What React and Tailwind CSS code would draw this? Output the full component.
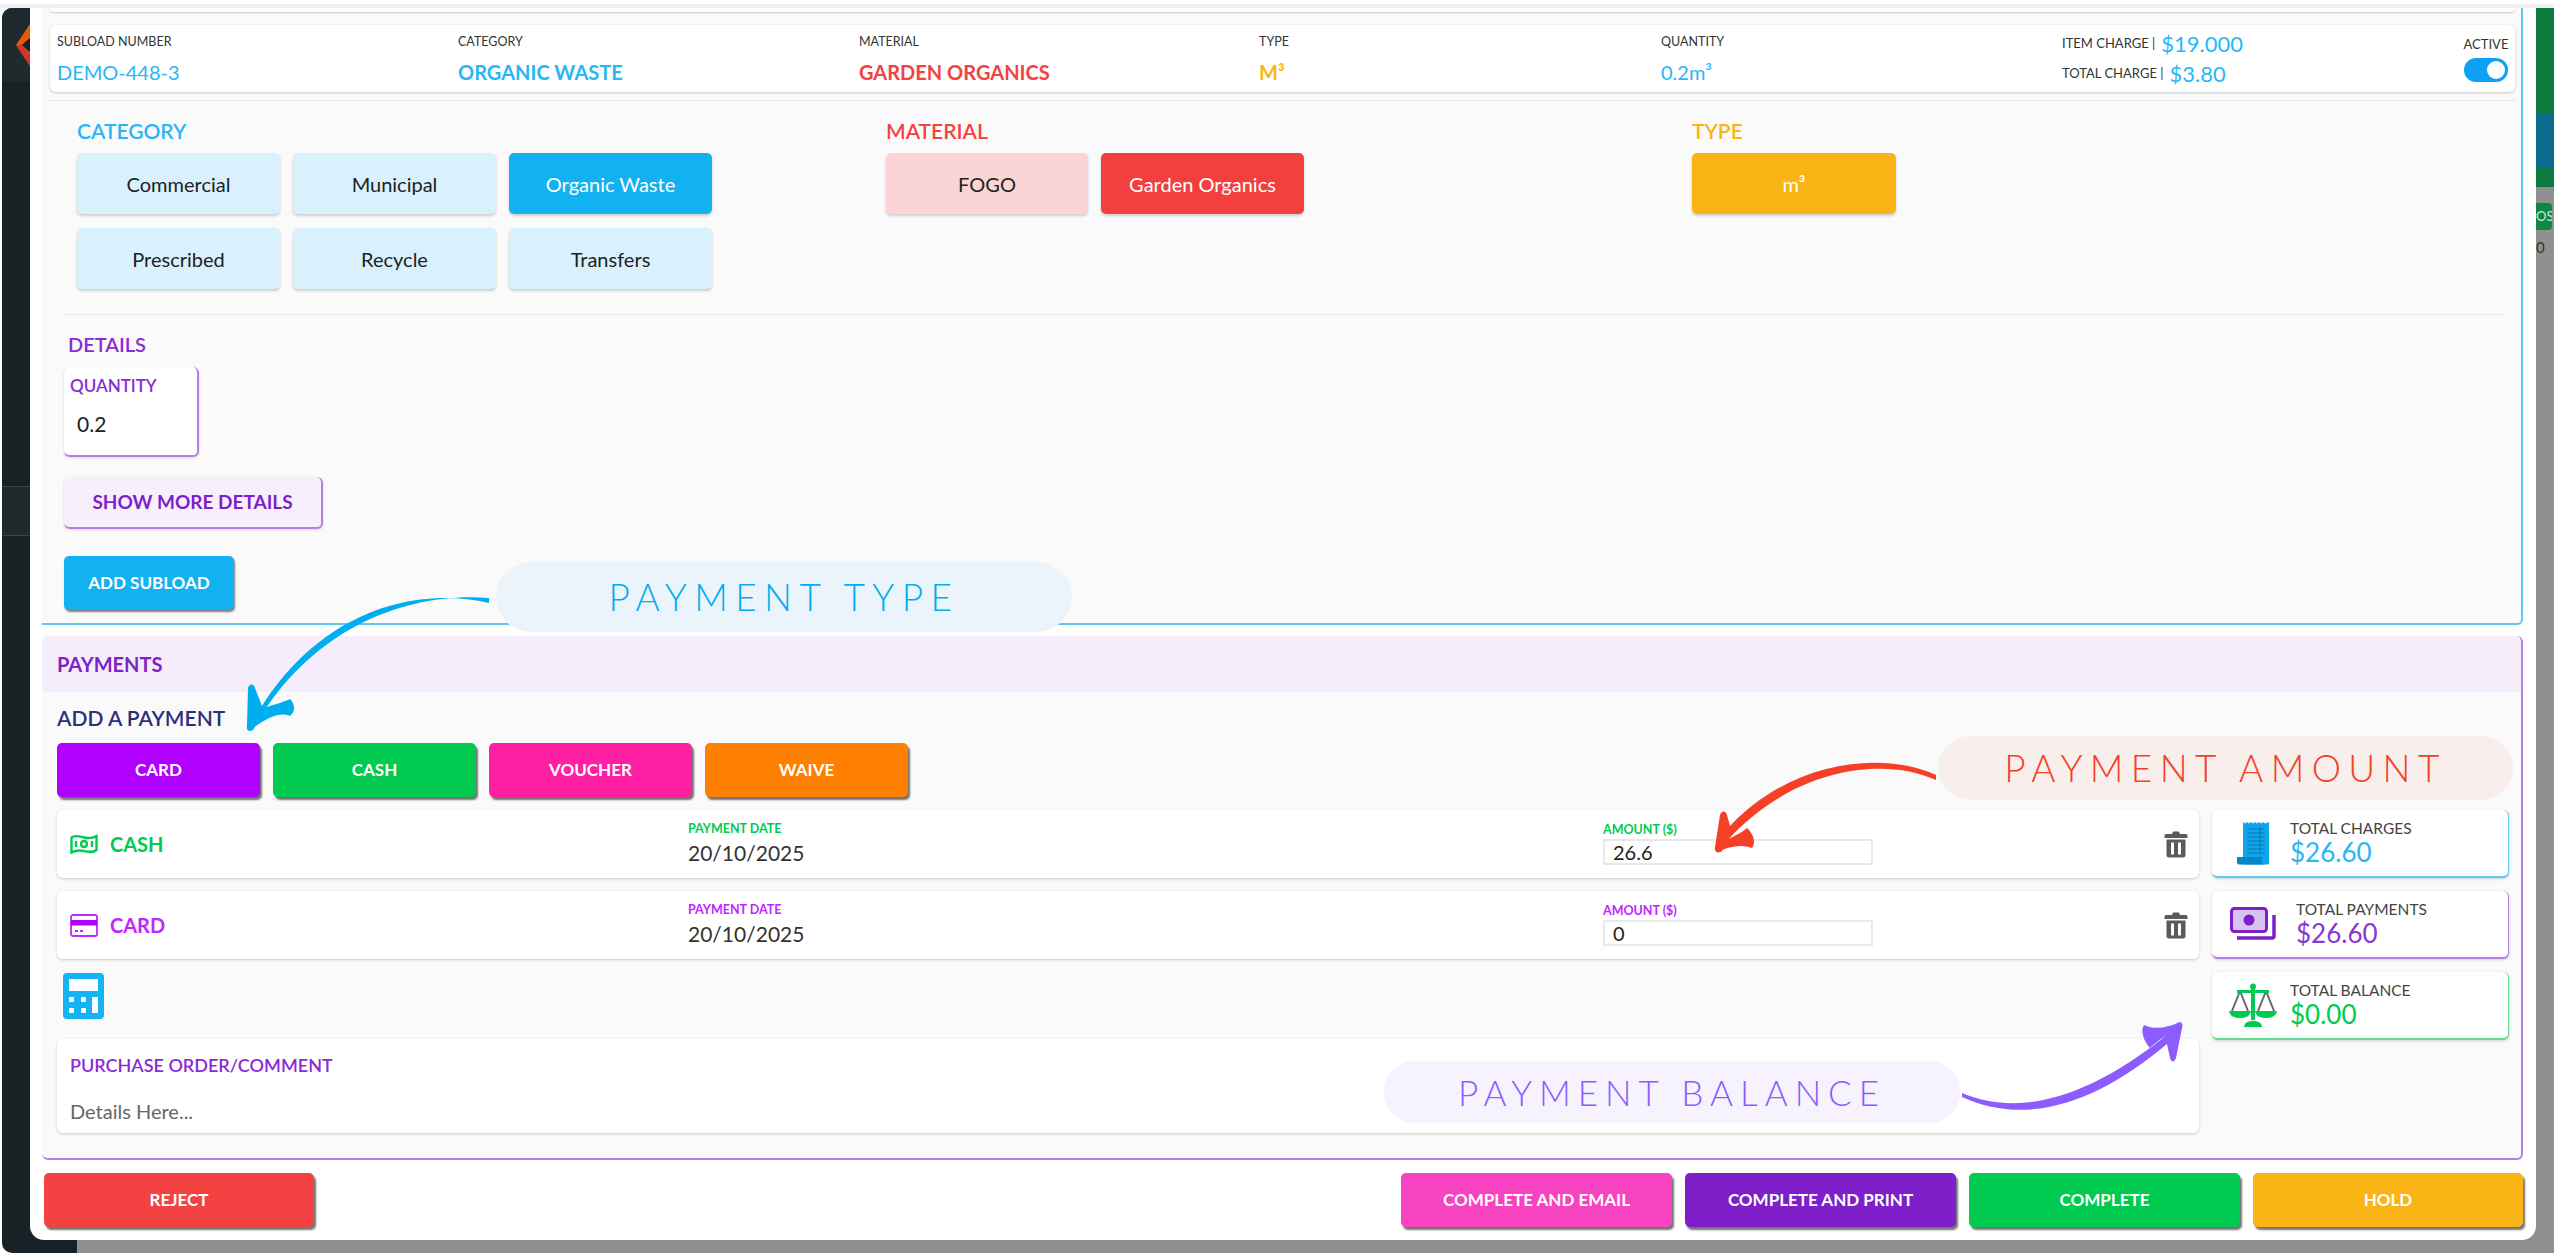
import React from "react";

const F = { fontFamily: '"Lato","Noto Sans",sans-serif' };

function Head({ label, value, color, w }) {
  return (
    <div style={{ width: w }} className="shrink-0">
      <div className="text-[12.5px] leading-[16px] text-[#333]">{label}</div>
      <div className={`mt-[10px] text-[20px] leading-[24px] ${color}`}>{value}</div>
    </div>
  );
}

function Choice({ children, cls }) {
  return (
    <div className={`h-[61px] rounded-[5px] flex items-center justify-center text-[20px] shadow-[0_2px_3px_rgba(0,0,0,0.18)] ${cls}`}>
      {children}
    </div>
  );
}

function PayBtn({ children, cls }) {
  return (
    <div className={`h-[54px] rounded-[5px] flex items-center justify-center text-white text-[17px] font-bold shadow-[2px_3px_2px_rgba(0,0,0,0.55)] ${cls}`}>
      {children}
    </div>
  );
}

const CashIcon = () => (
  <svg width="28" height="20" viewBox="0 0 28 20" fill="none" stroke="#00cb50" strokeWidth="2.4">
    <path d="M1.5 3.5c4-3 8-1 12.500 0s8 1 12.500-1.500v14c-4 3-8 2-12.500 1s-8-1-12.500 1.500z" />
    <circle cx="14" cy="10" r="3" />
    <path d="M6 7v6M22 7v6" />
  </svg>
);

const CardIcon = () => (
  <svg width="28" height="23" viewBox="0 0 28 23">
    <rect x="1" y="1" width="26" height="21" rx="2" fill="none" stroke="#c026ff" strokeWidth="1.800" />
    <rect x="1" y="6" width="26" height="5.500" fill="#b000ff" />
    <path d="M5 17h3M10 17h3" stroke="#c026ff" strokeWidth="1.800" />
  </svg>
);

const Trash = () => (
  <svg width="24" height="28" viewBox="0 0 24 28">
    <path d="M9 1.500h6l1 2.500h6a1.500 1.500 0 0 1 1.500 1.500V8H.5V5.500A1.500 1.500 0 0 1 2 4h6z" fill="#5b5b5b" />
    <path fillRule="evenodd" d="M2.500 9.500h19V25a2.500 2.500 0 0 1-2.500 2.500H5A2.500 2.500 0 0 1 2.500 25zM7 12.500v12h3v-12zM14 12.500v12h3v-12z" fill="#5b5b5b" />
  </svg>
);

const Calc = () => (
  <svg width="41" height="46" viewBox="0 0 41 46">
    <rect width="41" height="46" rx="4" fill="#14b4f4" />
    <rect x="6" y="6" width="29" height="12" fill="#fff" />
    <g fill="#fff">
      <rect x="6" y="24" width="5" height="5" rx="1" />
      <rect x="18" y="24" width="5" height="5" rx="1" />
      <rect x="6" y="35" width="5" height="5" rx="1" />
      <rect x="18" y="35" width="5" height="5" rx="1" />
      <rect x="29" y="24" width="6" height="16" />
    </g>
  </svg>
);

const Receipt = () => (
  <svg width="34" height="44" viewBox="0 0 34 44">
    <path d="M7 1l2 1.500L11 1l2 1.500L15 1l2 1.500L19 1l2 1.500L23 1l2 1.500L27 1l2 1.500L33 1v41a1.500 1.500 0 0 1-1.500 1.500H7z" fill="#0ea5ec" />
    <path d="M1 36h25v6l1.500 1.500H3a2 2 0 0 1-2-2z" fill="#0288c9" />
    <g stroke="#0479b5" strokeWidth="1">
      <path d="M11 8h18M11 12h18M11 16h18M11 20h18M11 24h18M11 28h18M11 32h18M24 6v26" />
    </g>
  </svg>
);

const Money = () => (
  <svg width="46" height="34" viewBox="0 0 46 34">
    <rect x="1.500" y="1.500" width="35" height="23" rx="3" fill="#d8c2ef" stroke="#7e1fc9" strokeWidth="3" />
    <circle cx="19" cy="13" r="5.500" fill="#7e1fc9" />
    <path d="M44 8v21a2 2 0 0 1-2 2H7" fill="none" stroke="#7e1fc9" strokeWidth="3.500" />
  </svg>
);

const Scale = () => (
  <svg width="48" height="44" viewBox="0 0 48 44">
    <path d="M11 8L3 28M11 8l8 20M37 8l-8 20M37 8l8 20" stroke="#5f6b70" strokeWidth="2" fill="none" />
    <circle cx="24" cy="3.500" r="3" fill="#00cb50" />
    <rect x="22" y="3" width="4" height="34" fill="#00cb50" />
    <path d="M8 7h32v3H8z" fill="#00cb50" />
    <path d="M0 28h22c-1 5-5 7-11 7S1 33 0 28zM26 28h22c-1 5-5 7-11 7s-10-2-11-7z" fill="#00cb50" />
    <path d="M15 44c0-4 4-6 9-6s9 2 9 6z" fill="#00cb50" />
  </svg>
);

function PayRow({ icon, name, color, amount }) {
  return (
    <div className="h-[68px] bg-white rounded-[6px] shadow-[0_1px_3px_rgba(0,0,0,0.2)] flex items-center">
      <div className="w-[631px] pl-[13px] flex items-center shrink-0">
        <div className="w-[40px] flex">{icon}</div>
        <span className={`text-[20px] font-bold ${color}`}>{name}</span>
      </div>
      <div className="w-[915px] shrink-0">
        <div className={`text-[12.500px] leading-[14px] font-bold ${color}`}>PAYMENT DATE</div>
        <div className="mt-[4px] text-[21px] leading-[26px] text-[#333]">20/10/2025</div>
      </div>
      <div className="w-[561px] shrink-0">
        <div className={`text-[12.500px] leading-[14px] font-bold ${color}`}>AMOUNT ($)</div>
        <div className="mt-[2px] w-[270px] h-[26px] border-2 border-[#e8e8e8] pl-[8px] text-[20px] leading-[22px] text-[#222]">{amount}</div>
      </div>
      <Trash />
    </div>
  );
}

function Stat({ icon, label, value, color, border, h, pl }) {
  return (
    <div className={`bg-white rounded-[6px] flex items-center border-b-2 border-r ${border} shadow-[0_1px_3px_rgba(0,0,0,0.18)] ${h}`}>
      <div className="w-[78px] flex justify-center pl-[4px] shrink-0">{icon}</div>
      <div className={pl}>
        <div className="text-[15.500px] leading-[18px] text-[#444]">{label}</div>
        <div className={`text-[26px] leading-[30px] ${color}`}>{value}</div>
      </div>
    </div>
  );
}

function Action({ children, cls, w }) {
  return (
    <div className={`h-[54px] rounded-[5px] flex items-center justify-center text-white text-[17px] font-bold shadow-[2px_3px_2px_rgba(0,0,0,0.55)] ${w} ${cls}`}>
      {children}
    </div>
  );
}

export default function App() {
  return (
    <div style={F} className="relative w-[2554px] h-[1257px] overflow-hidden bg-white">
      <div className="h-[4px] bg-white" />
      <div className="h-[4px] bg-[#efefef]" />
      <div className="flex h-[1245px]">
        {/* dark side bar behind the modal */}
        <div className="ml-[2px] w-[28px] shrink-0 bg-[#182125] rounded-l-[10px] flex flex-col overflow-hidden">
          <div className="h-[74px] bg-[#1f2a2f] shrink-0 flex justify-end items-center">
            <svg width="14" height="42" viewBox="0 0 14 42">
              <path d="M14 0v14L6 21l8 7v14L0 21z" fill="#e8590c" />
              <path d="M14 14v14L6 21z" fill="#182125" />
              <path d="M0 21l14 21V30L6 21z" fill="#d0342c" />
            </svg>
          </div>
          <div className="h-[405px] shrink-0 border-b border-[#39454a]" />
          <div className="h-[49px] shrink-0 bg-[#1f2a2f] border-b border-[#39454a]" />
        </div>
        <div className="flex-1 flex flex-col bg-[linear-gradient(90deg,#182125_47px,#8f908f_47px)]">
          <div className="flex h-[1232px]">
            {/* modal */}
            <div className="w-[2506px] shrink-0 bg-white rounded-b-[14px] pl-[12px] flex flex-col">
              {/* subload panel */}
              <div className="w-[2481px] h-[617px] bg-[#fafafa] rounded-br-[6px] border-r-2 border-b-2 border-[#5cc9f5] flex flex-col shrink-0">
                <div className="ml-[8px] w-[2465px] h-[4px] bg-white rounded-b-[6px] shadow-[0_1px_2px_rgba(0,0,0,0.2)]" />
                <div className="ml-[8px] mt-[13px] w-[2465px] h-[67px] bg-white rounded-[6px] shadow-[0_1px_3px_rgba(0,0,0,0.2)] flex items-center pl-[7px]">
                  <Head w="401px" label="SUBLOAD NUMBER" value="DEMO-448-3" color="text-[#29b6f6]" />
                  <Head w="401px" label="CATEGORY" value={<b>ORGANIC WASTE</b>} color="text-[#29b6f6]" />
                  <Head w="400px" label="MATERIAL" value={<b>GARDEN ORGANICS</b>} color="text-[#f44141]" />
                  <Head w="402px" label="TYPE" value={<b>M³</b>} color="text-[#fbb415]" />
                  <Head w="401px" label="QUANTITY" value="0.2m³" color="text-[#29b6f6]" />
                  <div className="w-[402px] shrink-0">
                    <div className="h-[30px] flex items-center gap-[6px] text-[13px] text-[#333]">ITEM CHARGE | <span className="text-[22px] text-[#29b6f6]">$19.000</span></div>
                    <div className="h-[30px] flex items-center gap-[6px] text-[13px] text-[#333]">TOTAL CHARGE | <span className="text-[22px] text-[#29b6f6]">$3.80</span></div>
                  </div>
                  <div className="w-[44px] shrink-0 flex flex-col items-center">
                    <div className="text-[13px] leading-[16px] text-[#333]">ACTIVE</div>
                    <div className="mt-[6px] w-[44px] h-[24px] rounded-full bg-[#0ea0f5] flex justify-end items-center pr-[3px]">
                      <div className="w-[18px] h-[18px] rounded-full bg-white" />
                    </div>
                  </div>
                </div>
                <div className="ml-[8px] mt-[8px] w-[2465px] border-t border-dotted border-[#d5d5d5]" />
                <div className="flex pl-[35px] mt-[20px]">
                  <div className="w-[809px] shrink-0">
                    <div className="text-[21px] leading-[20px] font-semibold text-[#29b6f6]">CATEGORY</div>
                    <div className="mt-[12px] grid grid-cols-[203px_203px_203px] gap-x-[13px] gap-y-[14px]">
                      <Choice cls="bg-[#d9f0fd] text-[#222]">Commercial</Choice>
                      <Choice cls="bg-[#d9f0fd] text-[#222]">Municipal</Choice>
                      <Choice cls="bg-[#12b2f2] text-white">Organic Waste</Choice>
                      <Choice cls="bg-[#d9f0fd] text-[#222]">Prescribed</Choice>
                      <Choice cls="bg-[#d9f0fd] text-[#222]">Recycle</Choice>
                      <Choice cls="bg-[#d9f0fd] text-[#222]">Transfers</Choice>
                    </div>
                  </div>
                  <div className="w-[806px] shrink-0">
                    <div className="text-[21px] leading-[20px] font-semibold text-[#f44141]">MATERIAL</div>
                    <div className="mt-[12px] grid grid-cols-[202px_203px] gap-x-[13px]">
                      <Choice cls="bg-[#fbd5d5] text-[#222]">FOGO</Choice>
                      <Choice cls="bg-[#f43f3f] text-white">Garden Organics</Choice>
                    </div>
                  </div>
                  <div>
                    <div className="text-[21px] leading-[20px] font-semibold text-[#fbb415]">TYPE</div>
                    <div className="mt-[12px] w-[204px]">
                      <Choice cls="bg-[#fbb415] text-white">m³</Choice>
                    </div>
                  </div>
                </div>
                <div className="ml-[22px] mt-[25px] w-[2439px] border-t border-dotted border-[#d5d5d5]" />
                <div className="ml-[26px] mt-[19px] text-[20px] leading-[20px] font-semibold text-[#8a2bd6]">DETAILS</div>
                <div className="ml-[22px] mt-[13px] w-[135px] h-[90px] bg-white rounded-[6px] border-r-2 border-b-2 border-[#b57fe6] shadow-[0_1px_3px_rgba(0,0,0,0.15)] pl-[6px] pt-[9px] shrink-0">
                  <div className="text-[17px] leading-[20px] font-semibold text-[#8a2bd6]">QUANTITY</div>
                  <div className="mt-[16px] pl-[7px] text-[21px] leading-[24px] text-[#222]">0.2</div>
                </div>
                <div className="ml-[22px] mt-[20px] w-[259px] h-[52px] bg-[#f8effd] rounded-[6px] border-r-2 border-b-2 border-[#b57fe6] shadow-[0_1px_3px_rgba(0,0,0,0.15)] flex items-center justify-center text-[19px] font-bold text-[#7e1fc9] shrink-0">SHOW MORE DETAILS</div>
                <div className="ml-[22px] mt-[27px] w-[170px] h-[54px] bg-[#12b2f2] rounded-[5px] shadow-[1px_2px_2px_rgba(0,0,0,0.5)] flex items-center justify-center text-[17px] font-bold text-white shrink-0">ADD SUBLOAD</div>
              </div>

              {/* payments panel */}
              <div className="mt-[11px] w-[2481px] h-[524px] bg-[#fafafa] rounded-[6px] border-r-2 border-b-2 border-[#b57fe6] flex flex-col shrink-0">
                <div className="h-[56px] bg-[#f5edfb] rounded-t-[6px] pl-[15px] flex items-center text-[20px] font-bold text-[#7e22c8] shrink-0">PAYMENTS</div>
                <div className="pl-[15px] mt-[16px] text-[21px] leading-[20px] font-semibold text-[#2c2f7c]">ADD A PAYMENT</div>
                <div className="pl-[15px] mt-[15px] grid grid-cols-[203px_203px_203px_203px] gap-x-[13px]">
                  <PayBtn cls="bg-[#b000ff]">CARD</PayBtn>
                  <PayBtn cls="bg-[#00cb50]">CASH</PayBtn>
                  <PayBtn cls="bg-[#ff1fa2]">VOUCHER</PayBtn>
                  <PayBtn cls="bg-[#ff7f00]">WAIVE</PayBtn>
                </div>
                <div className="pl-[15px] mt-[13px] flex gap-[13px]">
                  <div className="w-[2142px] shrink-0 flex flex-col">
                    <PayRow icon={<CashIcon />} name="CASH" color="text-[#00cb50]" amount="26.6" />
                    <div className="h-[13px]" />
                    <PayRow icon={<CardIcon />} name="CARD" color="text-[#c026ff]" amount="0" />
                    <div className="ml-[6px] mt-[14px] flex"><Calc /></div>
                    <div className="mt-[20px] h-[94px] bg-white rounded-[6px] shadow-[0_1px_3px_rgba(0,0,0,0.2)] pl-[13px] pt-[16px]">
                      <div className="text-[18px] leading-[20px] font-semibold text-[#8a2bd6]">PURCHASE ORDER/COMMENT</div>
                      <div className="mt-[24px] text-[20px] leading-[24px] text-[#666]">Details Here...</div>
                    </div>
                  </div>
                  <div className="w-[297px] shrink-0 flex flex-col gap-[13px]">
                    <Stat h="h-[68px]" border="border-[#5cc9f5]" icon={<Receipt />} label="TOTAL CHARGES" value="$26.60" color="text-[#29b6f6]" pl="pl-[0px]" />
                    <Stat h="h-[68px]" border="border-[#b57fe6]" icon={<Money />} label="TOTAL PAYMENTS" value="$26.60" color="text-[#8a35d6]" pl="pl-[6px]" />
                    <Stat h="h-[68px]" border="border-[#5fdc8c]" icon={<Scale />} label="TOTAL BALANCE" value="$0.00" color="text-[#00cb50]" pl="pl-[0px]" />
                  </div>
                </div>
              </div>

              {/* action bar */}
              <div className="mt-[13px] w-[2481px] flex items-center pl-[2px]">
                <Action w="w-[270px]" cls="bg-[#f44141]">REJECT</Action>
                <div className="ml-auto flex gap-[13px]">
                  <Action w="w-[271px]" cls="bg-[#f843c1]">COMPLETE AND EMAIL</Action>
                  <Action w="w-[271px]" cls="bg-[#7e1fc9]">COMPLETE AND PRINT</Action>
                  <Action w="w-[271px]" cls="bg-[#00cb50]">COMPLETE</Action>
                  <Action w="w-[270px]" cls="bg-[#fbb415]">HOLD</Action>
                </div>
              </div>
            </div>
            {/* what shows beside the modal */}
            <div className="flex-1 min-w-0 bg-[#8f908f] flex flex-col overflow-hidden">
              <div className="h-[105px] bg-[#0f7a40] shrink-0" />
              <div className="h-[54px] bg-[#0b6b8f] shrink-0" />
              <div className="h-[20px] bg-[#0f7a40] shrink-0" />
              <div className="mt-[16px] h-[27px] w-[16px] rounded-r-[4px] bg-[#0a8a46] text-[#d5e8db] text-[13px] leading-[27px] shrink-0 overflow-hidden">OS</div>
              <div className="mt-[6px] text-[15px] text-[#333] shrink-0">0</div>
            </div>
          </div>
          <div className="h-[13px]" />
        </div>
      </div>

      {/* annotations laid over the page */}
      <div className="absolute left-[496px] top-[562px] w-[576px] h-[70px] rounded-full bg-[#ecf4fb] flex items-center justify-center">
        <span className="text-[37px] font-light tracking-[0.2em] text-[#00aeef]">PAYMENT TYPE</span>
      </div>
      <div className="absolute left-[1938px] top-[736px] w-[575px] h-[64px] rounded-full bg-[#f8eeec] flex items-center justify-center">
        <span className="text-[37px] font-light tracking-[0.2em] text-[#f44027]">PAYMENT AMOUNT</span>
      </div>
      <div className="absolute left-[1384px] top-[1061px] w-[576px] h-[62px] rounded-full bg-[#f6f3fe] flex items-center justify-center">
        <span className="text-[35px] font-light tracking-[0.2em] text-[#8c5cff]">PAYMENT BALANCE</span>
      </div>
      <svg className="absolute left-0 top-0 pointer-events-none" width="2554" height="1257" viewBox="0 0 2554 1257">
        <path d="M489 598C410 592 320 625 263 713L253 730C248 733 246 729 247 725L248 688C250 683 254 684 255 688L262 706C320 615 410 585 489 603Z" fill="#00aeef" />
        <path d="M250 730C270 716 280 712 290 716C295 712 296 705 290 699C282 703 268 706 258 710Z" fill="#00aeef" />
        <path d="M1936 780C1880 755 1790 770 1726 842L1722 851C1718 854 1714 852 1715 847L1720 815C1722 810 1726 811 1727 815L1730 826C1790 762 1880 750 1936 775Z" fill="#f44027" />
        <path d="M1717 852C1730 846 1742 844 1752 848C1757 842 1752 832 1747 828C1740 834 1730 838 1722 842Z" fill="#f44027" />
        <path d="M1962 1093C2030 1122 2105 1085 2168 1034L2176 1024C2180 1020 2184 1023 2182 1028L2176 1058C2174 1063 2171 1062 2170 1058L2167 1044C2100 1100 2030 1128 1962 1097Z" fill="#8c5cff" />
        <path d="M2181 1022C2165 1028 2155 1030 2144 1025C2140 1030 2144 1042 2150 1048C2158 1040 2168 1034 2178 1030Z" fill="#8c5cff" />
      </svg>
    </div>
  );
}
